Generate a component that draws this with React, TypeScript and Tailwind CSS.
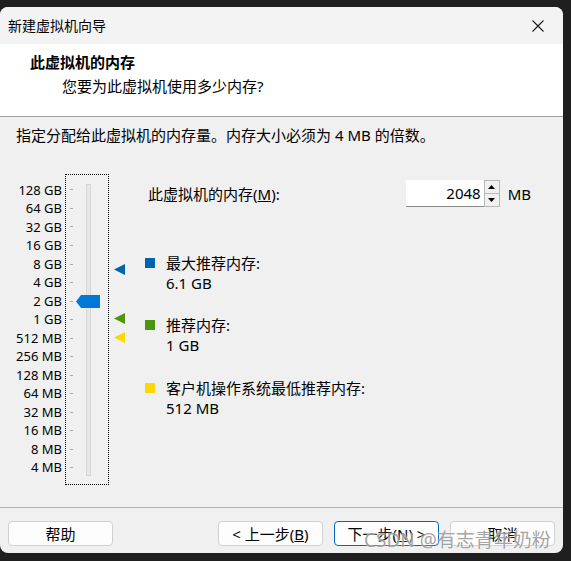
import React from "react";

const scale = [
  "128 GB", "64 GB", "32 GB", "16 GB", "8 GB", "4 GB", "2 GB", "1 GB",
  "512 MB", "256 MB", "128 MB", "64 MB", "32 MB", "16 MB", "8 MB", "4 MB",
];

const legend = [
  { color: "bg-[#0063b1]", label: "最大推荐内存:", value: "6.1 GB", gap: "mt-[46px]" },
  { color: "bg-[#4a960f]", label: "推荐内存:", value: "1 GB", gap: "mt-[22px]" },
  { color: "bg-[#fcd700]", label: "客户机操作系统最低推荐内存:", value: "512 MB", gap: "mt-[23px]" },
];

function Marker({ color, top }: { color: string; top: string }) {
  return (
    <svg className={`absolute left-[5px] ${top}`} width="11" height="11" viewBox="0 0 11 11">
      <path d="M0 5.5 L11 0 L11 11 Z" fill={color} />
    </svg>
  );
}

function Btn({ children, focused }: { children: React.ReactNode; focused?: boolean }) {
  return (
    <button
      className={`h-[25px] w-[105px] rounded-[4px] bg-[#fdfdfd] text-[15px] leading-[20px] text-black border ${
        focused ? "border-[#0067c0]" : "border-[#d0d0d0]"
      }`}
    >
      {children}
    </button>
  );
}

export default function App() {
  return (
    <div
      className="relative w-[571px] h-[561px] bg-[#1f1f1f] pt-[7px]"
      style={{ fontFamily: '"Noto Sans", "Noto Sans CJK SC", sans-serif' }}
    >
      <div className="w-[563px] h-[546px] rounded-[8px] overflow-hidden flex flex-col bg-[#f0f0f0]">
        {/* title bar */}
        <div className="h-[37px] bg-[#f3f3f3] flex items-center justify-between pl-[8px] pr-[19px]">
          <span className="text-[14px] leading-[20px] text-black">新建虚拟机向导</span>
          <svg width="12" height="12" viewBox="0 0 12 12">
            <path d="M0.5 0.5 L11.5 11.5 M11.5 0.5 L0.5 11.5" stroke="#1a1a1a" strokeWidth="1.1" />
          </svg>
        </div>

        {/* header */}
        <div className="h-[72px] bg-white pl-[30px] pt-[8px]">
          <div className="text-[15px] leading-[20px] font-bold text-black">此虚拟机的内存</div>
          <div className="mt-[4px] pl-[32px] text-[15px] leading-[20px] text-black">您要为此虚拟机使用多少内存?</div>
        </div>
        <div className="h-px bg-[#a0a0a0]" />

        {/* body */}
        <div className="h-[390px] pt-[8px]">
          <div className="pl-[16px] text-[15px] leading-[20px] text-black">
            指定分配给此虚拟机的内存量。内存大小必须为 4 MB 的倍数。
          </div>

          <div className="mt-[29px] flex pl-[8px]">
            {/* scale labels */}
            <div className="w-[54px] pt-[6.7px] mr-[3px]">
              {scale.map((s) => (
                <div key={s} className="h-[18.53px] leading-[18.53px] text-right text-[13px] text-black whitespace-nowrap">
                  {s}
                </div>
              ))}
            </div>

            {/* slider */}
            <div className="relative w-[44px] h-[311px] border border-dotted border-black">
              <div className="pt-[5.7px]">
                {scale.map((s) => (
                  <div key={s} className="h-[18.53px] flex items-center">
                    <div className="ml-[4px] w-[3px] h-px bg-[#a8a8a8]" />
                  </div>
                ))}
              </div>
              <div className="absolute left-[20px] top-[9px] bottom-[8px] w-[5px] bg-[#e7e7e7] border border-[#d6d6d6]" />
              <svg className="absolute left-[10px] top-[120px]" width="24" height="13" viewBox="0 0 24 13">
                <path d="M0 6.5 L5 0 L24 0 L24 13 L5 13 Z" fill="#0078d7" />
              </svg>
            </div>

            {/* recommendation markers */}
            <div className="relative w-[36px] h-[311px]">
              <Marker color="#0063b1" top="top-[90px]" />
              <Marker color="#4a960f" top="top-[139px]" />
              <Marker color="#fcd700" top="top-[158px]" />
            </div>

            {/* right side */}
            <div className="flex-1 pr-[32px]">
              <div className="mt-[6px] h-[27px] flex items-center">
                <span className="flex-1 pl-[3px] text-[15px] leading-[20px] text-black">
                  此虚拟机的内存(<span className="underline">M</span>):
                </span>
                <div className="flex h-[27px]">
                  <div className="w-[78px] h-[27px] bg-white border-b border-[#8a8a8a] flex items-center justify-end pr-[3px] text-[15px] text-black">
                    2048
                  </div>
                  <div className="w-[16px] h-[27px] flex flex-col border border-[#b8b8b8] bg-[#f0f0f0]">
                    <div className="flex-1 flex items-center justify-center border-b border-[#b8b8b8]">
                      <svg width="7" height="4" viewBox="0 0 7 4"><path d="M0 4 L3.5 0 L7 4 Z" fill="#000" /></svg>
                    </div>
                    <div className="flex-1 flex items-center justify-center">
                      <svg width="7" height="4" viewBox="0 0 7 4"><path d="M0 0 L7 0 L3.5 4 Z" fill="#000" /></svg>
                    </div>
                  </div>
                </div>
                <span className="ml-[8px] text-[15px] leading-[20px] text-black">MB</span>
              </div>

              {legend.map((l) => (
                <div key={l.label} className={`${l.gap} flex`}>
                  <div className={`mt-[5px] w-[10px] h-[10px] ${l.color}`} />
                  <div className="ml-[11px] text-[15px] leading-[20px] text-black">
                    <div>{l.label}</div>
                    <div>{l.value}</div>
                  </div>
                </div>
              ))}
            </div>
          </div>
        </div>
        <div className="h-px bg-[#b4b4b4]" />

        {/* footer */}
        <div className="h-[45px] flex pt-[13px] px-[8px]">
          <Btn>帮助</Btn>
          <div className="flex-1" />
          <div className="flex gap-[11px]">
            <Btn>
              &lt; 上一步(<span className="underline">B</span>)
            </Btn>
            <Btn focused>
              下一步(<span className="underline">N</span>) &gt;
            </Btn>
            <Btn>取消</Btn>
          </div>
        </div>
      </div>

      {/* watermark over the footer buttons */}
      <div className="absolute left-[364px] top-[527px] text-[19px] leading-[26px] text-[#8c8c8c]/80 whitespace-nowrap [text-shadow:0_0_2px_#ffffff]">
        CSDN @有志青年奶粉
      </div>
    </div>
  );
}
